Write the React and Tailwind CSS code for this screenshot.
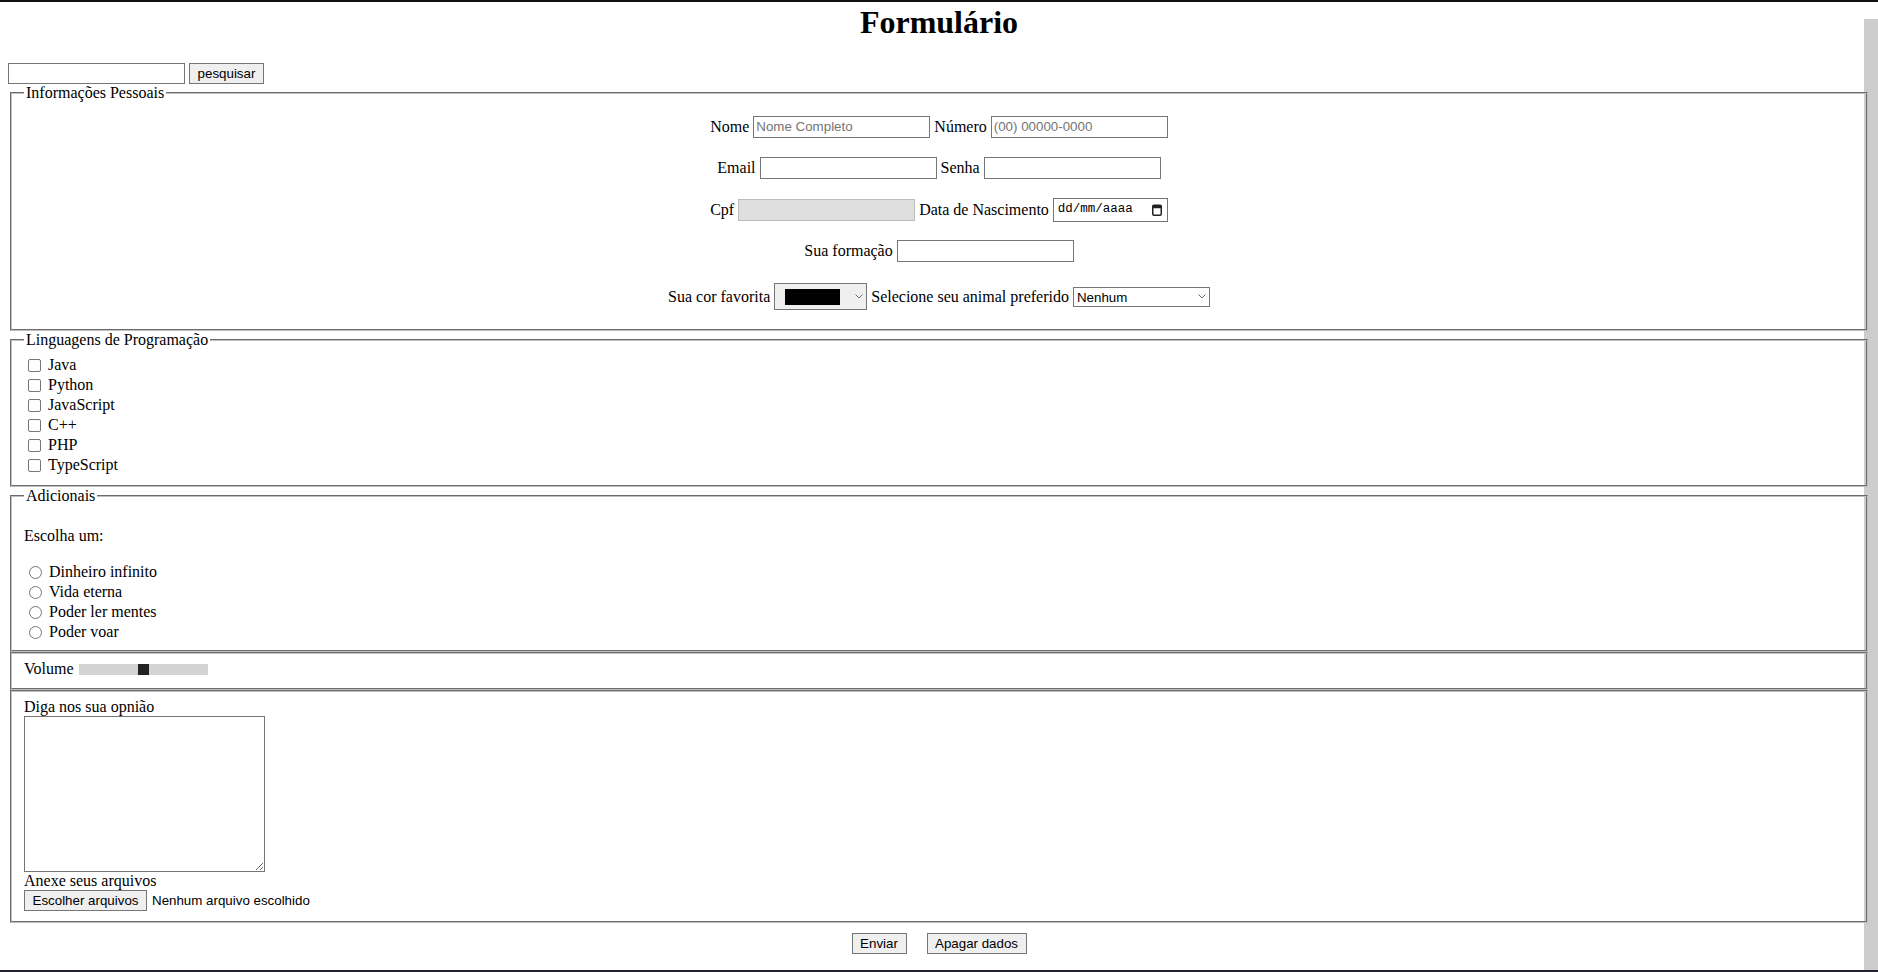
import { useState } from 'react';

// Plain HTML-style form: "Formulário"
const sans = "font-['Liberation_Sans',Arial,sans-serif] text-[13.33px]";
const field = `h-[22px] w-[177px] border px-[2px] text-black outline-none placeholder:text-[#757575] ${sans}`;
const btn = `h-[21px] border border-[#767676] bg-[#efefef] text-black text-center ${sans}`;

function Box({ legend, className = '', children }) {
  return (
    <fieldset className={`mx-[2px] min-w-0 border-2 border-[#c0c0c0] [border-style:groove] [--tw-border-style:groove] px-[12px] ${className}`}>
      {legend && <legend className="px-[2px] leading-[18px]">{legend}</legend>}
      {children}
    </fieldset>
  );
}

function Chevron() {
  return (
    <svg width="8" height="5" viewBox="0 0 8 5" className="shrink-0">
      <polyline points="0.5,0.5 4,4 7.5,0.5" fill="none" stroke="#6d6d6d" strokeWidth="1" />
    </svg>
  );
}

const langs = ['Java', 'Python', 'JavaScript', 'C++', 'PHP', 'TypeScript'];
const powers = ['Dinheiro infinito', 'Vida eterna', 'Poder ler mentes', 'Poder voar'];

export default function App() {
  const [busca, setBusca] = useState('');
  const [volume, setVolume] = useState(50);

  return (
    <div className="relative h-[972px] overflow-hidden bg-white text-[16px] text-black font-['Liberation_Serif','Times_New_Roman',serif]">
      <div className="h-[2px] bg-[#111]" />
      <div aria-hidden className="absolute right-0 top-[19px] bottom-[2px] w-[14px] bg-[#cdcdcd]" />

      <div className="relative px-[8px]">
        <h1 className="mt-[2px] text-center text-[32px] font-bold leading-[37px]">Formulário</h1>

        <div className="mt-[22px] flex h-[21px] gap-[4px]">
          <input className={`h-[21px] w-[177px] border border-[#767676] bg-white px-[2px] outline-none ${sans}`} value={busca} onChange={(e) => setBusca(e.target.value)} />
          <button className={`${btn} w-[75px]`}>pesquisar</button>
        </div>

        <Box legend="Informações Pessoais" className="pb-[19px]">
          <div className="flex flex-col items-center gap-[16px] pt-[12px]">
            <div className="flex h-[25.5px] items-center gap-[4px]">
              <label className="leading-[18px]">Nome</label>
              <input className={`${field} border-[#767676] bg-white`} placeholder="Nome Completo" />
              <label className="leading-[18px]">Número</label>
              <input className={`${field} border-[#767676] bg-white`} placeholder="(00) 00000-0000" />
            </div>
            <div className="flex h-[25.5px] items-center gap-[4px]">
              <label className="leading-[18px]">Email</label>
              <input className={`${field} border-[#767676] bg-white`} type="email" />
              <label className="leading-[18px]">Senha</label>
              <input className={`${field} border-[#767676] bg-white`} type="password" />
            </div>
            <div className="flex h-[25.5px] items-center gap-[4px]">
              <label className="leading-[18px]">Cpf</label>
              <input className={`${field} border-[#bdbdbd] bg-[#dfdfdf]`} disabled />
              <label className="leading-[18px]">Data de Nascimento</label>
              <div className="flex h-[24px] w-[115px] items-center justify-between border border-[#767676] bg-white pl-[4px] pr-[5px]">
                <span className="font-['Liberation_Mono','Courier_New',monospace] text-[12.5px] leading-[15px]">dd/mm/aaaa</span>
                <svg width="10" height="12" viewBox="0 0 10 12">
                  <rect x="0.75" y="1.25" width="8.5" height="10" rx="1.2" fill="none" stroke="#222" strokeWidth="1.5" />
                  <rect x="0.75" y="1.25" width="8.5" height="3" fill="#222" />
                </svg>
              </div>
            </div>
            <div className="flex h-[25.5px] items-center gap-[4px]">
              <label className="leading-[18px]">Sua formação</label>
              <input className={`${field} border-[#767676] bg-white`} />
            </div>
            <div className="mt-[3px] flex h-[27px] items-center gap-[4px]">
              <label className="leading-[18px]">Sua cor favorita</label>
              <div className="flex h-[27px] w-[93px] items-center border border-[#767676] bg-[#efefef] pl-[10px] pr-[3px]">
                <div className="h-[16px] w-[55px] bg-black" />
                <div className="ml-auto"><Chevron /></div>
              </div>
              <label className="leading-[18px]">Selecione seu animal preferido</label>
              <span className="relative flex h-[20px] w-[137px]">
                <select className={`h-[20px] w-[137px] appearance-none border border-[#767676] bg-white pl-[3px] text-black outline-none ${sans}`}>
                  <option>Nenhum</option>
                  <option>Cachorro</option>
                  <option>Gato</option>
                  <option>Pássaro</option>
                </select>
                <span className="pointer-events-none absolute right-[4px] top-[7px]"><Chevron /></span>
              </span>
            </div>
          </div>
        </Box>

        <Box legend="Linguagens de Programação" className="pt-[6px] pb-[10px]">
          {langs.map((l) => (
            <label key={l} className="flex h-[20px] items-center">
              <input type="checkbox" className="ml-[4px] h-[13px] w-[13px] appearance-none rounded-[2px] border border-[#767676] bg-white checked:bg-[#0075ff]" />
              <span className="ml-[7px] leading-[18px]">{l}</span>
            </label>
          ))}
        </Box>

        <Box legend="Adicionais" className="pb-[8px]">
          <p className="pt-[22px] leading-[18px]">Escolha um:</p>
          <div className="mt-[17px]">
            {powers.map((p) => (
              <label key={p} className="flex h-[20px] items-center">
                <input type="radio" name="poder" className="ml-[5px] h-[13px] w-[13px] appearance-none rounded-full border border-[#767676] bg-white checked:border-[4px] checked:border-[#0075ff]" />
                <span className="ml-[7px] leading-[18px]">{p}</span>
              </label>
            ))}
          </div>
        </Box>

        <Box className="pt-[6px] pb-[10px]">
          <div className="flex h-[18px] items-center">
            <label className="leading-[18px]">Volume</label>
            <input
              type="range"
              value={volume}
              onChange={(e) => setVolume(e.target.value)}
              className="ml-[6px] h-[11px] w-[129px] appearance-none bg-[#d3d3d3] outline-none [&::-webkit-slider-thumb]:h-[11px] [&::-webkit-slider-thumb]:w-[11px] [&::-webkit-slider-thumb]:appearance-none [&::-webkit-slider-thumb]:bg-[#222]"
            />
          </div>
        </Box>

        <Box className="pt-[6px] pb-[10px]">
          <label className="block leading-[18px]">Diga nos sua opnião</label>
          <textarea className="block h-[156px] w-[241px] resize border border-[#767676] bg-white outline-none" />
          <label className="block leading-[18px]">Anexe seus arquivos</label>
          <div className="flex h-[21px] items-center">
            <button className={`${btn} w-[123px]`}>Escolher arquivos</button>
            <span className={`ml-[5px] ${sans}`}>Nenhum arquivo escolhido</span>
          </div>
        </Box>

        <div className="mt-[10px] flex justify-center gap-[20px]">
          <button className={`${btn} w-[55px]`}>Enviar</button>
          <button className={`${btn} w-[100px]`}>Apagar dados</button>
        </div>
      </div>

      <div className="absolute bottom-0 left-0 right-0 h-[2px] bg-[#1f2430]" />
    </div>
  );
}
